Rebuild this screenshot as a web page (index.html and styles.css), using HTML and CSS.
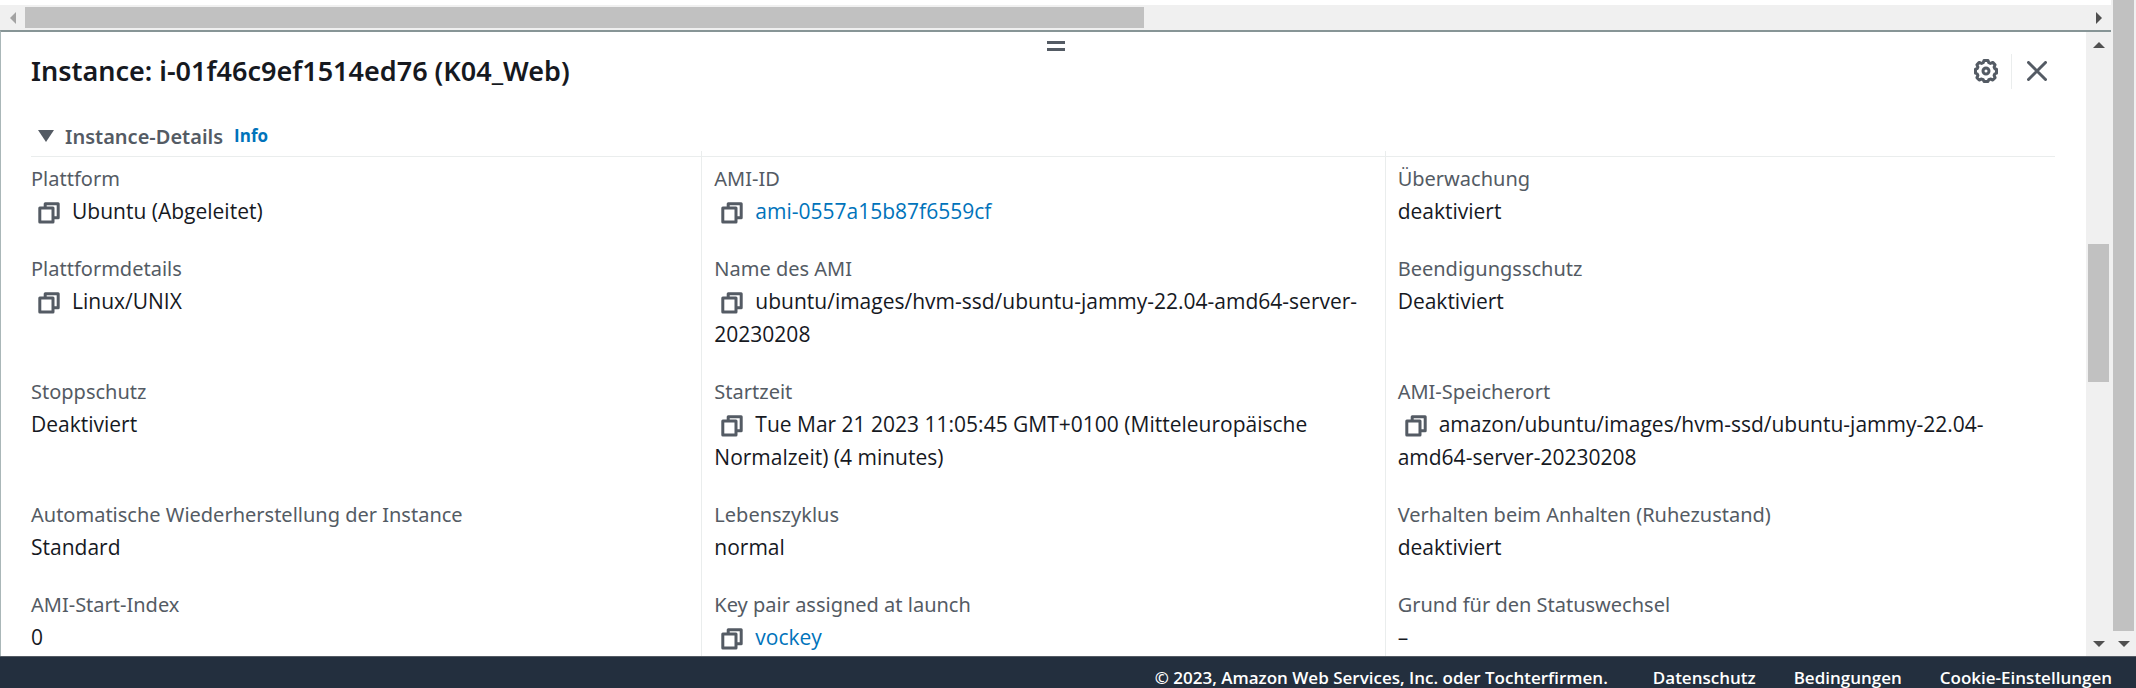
FILE: index.html
```html
<!DOCTYPE html>
<html lang="de">
<head>
<meta charset="utf-8">
<title>Instance-Details</title>
<link rel="stylesheet" href="styles.css">
</head>
<body>
<svg class="sprite" aria-hidden="true">
  <symbol id="copy" viewBox="0 0 24 24"><path d="M2.800 7H16v14H2.800zM8.200 6V2.700h13v14H17" fill="none" stroke="currentColor" stroke-width="3" stroke-linejoin="round"/></symbol>
</svg>
<div class="page">
  <div class="content">
    <div class="hscroll" aria-hidden="true">
      <span class="arrow arrow-left"></span>
      <span class="htrack"><span class="hthumb"></span></span>
      <span class="arrow arrow-right"></span>
    </div>
    <section class="panel">
      <div class="panel-body">
        <button class="grip" aria-label="Größe ändern"><span></span><span></span></button>
        <header class="panel-head">
          <h2>Instance: i-01f46c9ef1514ed76 (K04_Web)</h2>
          <div class="tools">
            <button aria-label="Einstellungen"><svg class="icon-gear" viewBox="0 0 24 24" fill="none" stroke="currentColor"><path d="M10 1.500h4l.8 2.200 1.600.7 2.400-1 2.300 2.300-1 2.400.7 1.600 1.700.5v4l-1.700.6-.7 1.600 1 2.300-2.300 2.300-2.400-1-1.600.7-.8 1.800h-4l-.8-1.800-1.600-.7-2.400 1-2.300-2.300 1-2.400-.7-1.500-1.700-.6v-4l1.700-.6.7-1.500-1-2.400 2.300-2.300 2.400 1 1.600-.7z" stroke-width="3" stroke-linejoin="round"/><circle cx="12" cy="12" r="3" stroke-width="3"/></svg></button>
            <button class="close" aria-label="Schließen"><svg class="icon-close" viewBox="0 0 20 20"><path d="M1.500 1.500l17 17M18.500 1.500l-17 17" stroke="currentColor" stroke-width="3" stroke-linecap="round"/></svg></button>
          </div>
        </header>
        <div class="section-head">
          <button class="toggle" aria-expanded="true"><span class="caret"></span>Instance-Details</button>
          <a class="info" href="#info">Info</a>
        </div>
        <dl class="grid">
          <div class="cell"><dt>Plattform</dt><dd><button class="copy" aria-label="Kopieren"><svg><use href="#copy"/></svg></button>Ubuntu (Abgeleitet)</dd></div>
          <div class="cell"><dt>AMI-ID</dt><dd><button class="copy" aria-label="Kopieren"><svg><use href="#copy"/></svg></button><a href="#ami">ami-0557a15b87f6559cf</a></dd></div>
          <div class="cell"><dt>Überwachung</dt><dd>deaktiviert</dd></div>
          <div class="cell"><dt>Plattformdetails</dt><dd><button class="copy" aria-label="Kopieren"><svg><use href="#copy"/></svg></button>Linux/UNIX</dd></div>
          <div class="cell"><dt>Name des AMI</dt><dd><button class="copy" aria-label="Kopieren"><svg><use href="#copy"/></svg></button>ubuntu/images/hvm-ssd/ubuntu-jammy-22.04-amd64-server-<wbr>20230208</dd></div>
          <div class="cell"><dt>Beendigungsschutz</dt><dd>Deaktiviert</dd></div>
          <div class="cell"><dt>Stoppschutz</dt><dd>Deaktiviert</dd></div>
          <div class="cell"><dt>Startzeit</dt><dd><button class="copy" aria-label="Kopieren"><svg><use href="#copy"/></svg></button>Tue Mar 21 2023 11:05:45 GMT+0100 (Mitteleuropäische Normalzeit) (4 minutes)</dd></div>
          <div class="cell"><dt>AMI-Speicherort</dt><dd><button class="copy" aria-label="Kopieren"><svg><use href="#copy"/></svg></button>amazon/ubuntu/images/hvm-ssd/ubuntu-jammy-22.04-<wbr><span class="keep">amd64-server-20230208</span></dd></div>
          <div class="cell"><dt>Automatische Wiederherstellung der Instance</dt><dd>Standard</dd></div>
          <div class="cell"><dt>Lebenszyklus</dt><dd>normal</dd></div>
          <div class="cell"><dt>Verhalten beim Anhalten (Ruhezustand)</dt><dd>deaktiviert</dd></div>
          <div class="cell"><dt>AMI-Start-Index</dt><dd>0</dd></div>
          <div class="cell"><dt>Key pair assigned at launch</dt><dd><button class="copy" aria-label="Kopieren"><svg><use href="#copy"/></svg></button><a href="#key">vockey</a></dd></div>
          <div class="cell"><dt>Grund für den Statuswechsel</dt><dd>–</dd></div>
        </dl>
      </div>
      <div class="vscroll" aria-hidden="true">
        <span class="arrow arrow-up"></span>
        <span class="vtrack"><span class="vthumb"></span></span>
        <span class="arrow arrow-down"></span>
      </div>
    </section>
  </div>
  <div class="vscroll outer" aria-hidden="true">
    <span class="vtrack"><span class="vthumb"></span></span>
    <span class="arrow arrow-down"></span>
  </div>
</div>
<footer class="footer">
  <span class="copyright">© 2023, Amazon Web Services, Inc. oder Tochterfirmen.</span>
  <a href="#privacy">Datenschutz</a>
  <a href="#terms">Bedingungen</a>
  <a href="#cookies">Cookie-Einstellungen</a>
</footer>
</body>
</html>
```
FILE: styles.css
```css
* { box-sizing: border-box; }
body {
  margin: 0;
  height: 100vh;
  display: flex;
  flex-direction: column;
  overflow: hidden;
  background: #fff;
  color: #16191f;
  font: 21px/33px "Open Sans", "Noto Sans", sans-serif;
}
button { margin: 0; padding: 0; border: 0; background: none; color: #545b64; font: inherit; }
a { color: #0073bb; text-decoration: none; }
svg { display: block; }
.sprite { position: absolute; width: 0; height: 0; }
.page { flex: 1; min-height: 0; display: flex; }
.content { flex: 1; min-width: 0; display: flex; flex-direction: column; padding-top: 5px; }

.hscroll { display: flex; height: 25px; background: #f0f0f0; }
.htrack { flex: 1; display: flex; padding: 2px 0; }
.hthumb { width: 54.3%; background: #c1c1c1; }
.vscroll { flex: none; width: 25px; display: flex; flex-direction: column; background: #f0f0f0; }
.vtrack { flex: 1; min-height: 0; display: flex; flex-direction: column; padding: 0 2px; }
.vthumb { height: 24%; margin-top: 187px; background: #c1c1c1; }
.outer .vthumb { height: 100%; margin-top: 0; }
.arrow { flex: none; width: 25px; height: 25px; display: grid; place-items: center; }
.arrow::before { content: ""; border: 6px solid transparent; }
.arrow-left::before { border-right-color: #a3a3a3; border-left-width: 0; }
.arrow-right::before { border-left-color: #505050; border-right-width: 0; }
.arrow-up::before { border-bottom-color: #505050; border-top-width: 0; }
.arrow-down::before { border-top-color: #505050; border-bottom-width: 0; }

.panel { flex: 1; min-height: 0; display: flex; border-top: 2px solid #879596; border-left: 1px solid #aab7b8; }
.panel-body { flex: 1; min-width: 0; overflow: hidden; padding: 9px 31px 0 30px; }
.grip { display: flex; flex-direction: column; gap: 4px; width: 18px; margin-left: calc(50% + 4px); }
.grip span { height: 3px; background: #545b64; }
.panel-head { display: flex; align-items: center; justify-content: space-between; height: 40px; }
h2 { margin: 0; font: 600 27px/36px "Noto Sans", sans-serif; }
.tools { display: flex; align-items: center; padding-right: 8px; }
.close { height: 35px; margin-left: 13px; padding-left: 15px; border-left: 1px solid #eaeded; }
.icon-gear { width: 24px; height: 24px; }
.icon-close { width: 20px; height: 20px; }
.section-head { display: flex; align-items: baseline; gap: 11px; height: 60px; padding-top: 28px; }
.toggle { display: flex; align-items: center; gap: 11px; padding-left: 7px; font: 600 20px/33px "Noto Sans", sans-serif; }
.caret { border: solid transparent; border-width: 12px 8px 0; border-top-color: #545b64; }
.info { font-size: 17px; font-weight: 700; }

.grid { display: grid; grid-template-columns: repeat(3, 1fr); column-gap: 26px; margin: 0; background: linear-gradient(#eaeded, #eaeded) 0 5px / 100% 1px no-repeat; }
.cell { margin-left: -13px; padding: 11px 0 13px 12px; border-left: 1px solid #eaeded; }
.cell:nth-child(3n + 1) { margin-left: 0; padding-left: 0; border-left: 0; }
dt { color: #545b64; font-family: "Noto Sans", sans-serif; font-size: 20px; }
dd { margin: 0; }
.keep { white-space: nowrap; }
.copy { display: inline-block; vertical-align: -6px; margin: 0 11px 0 6px; }
.copy svg { width: 24px; height: 24px; }

.footer { display: flex; justify-content: flex-end; gap: 38px; height: 32px; padding: 7px 24px 0 0; border-top: 1px solid #545b64; background: #232f3e; color: #fff; font-size: 17px; line-height: 27px; font-weight: 600; }
.footer a { color: #fff; }
.copyright { margin-right: 7px; }
```
